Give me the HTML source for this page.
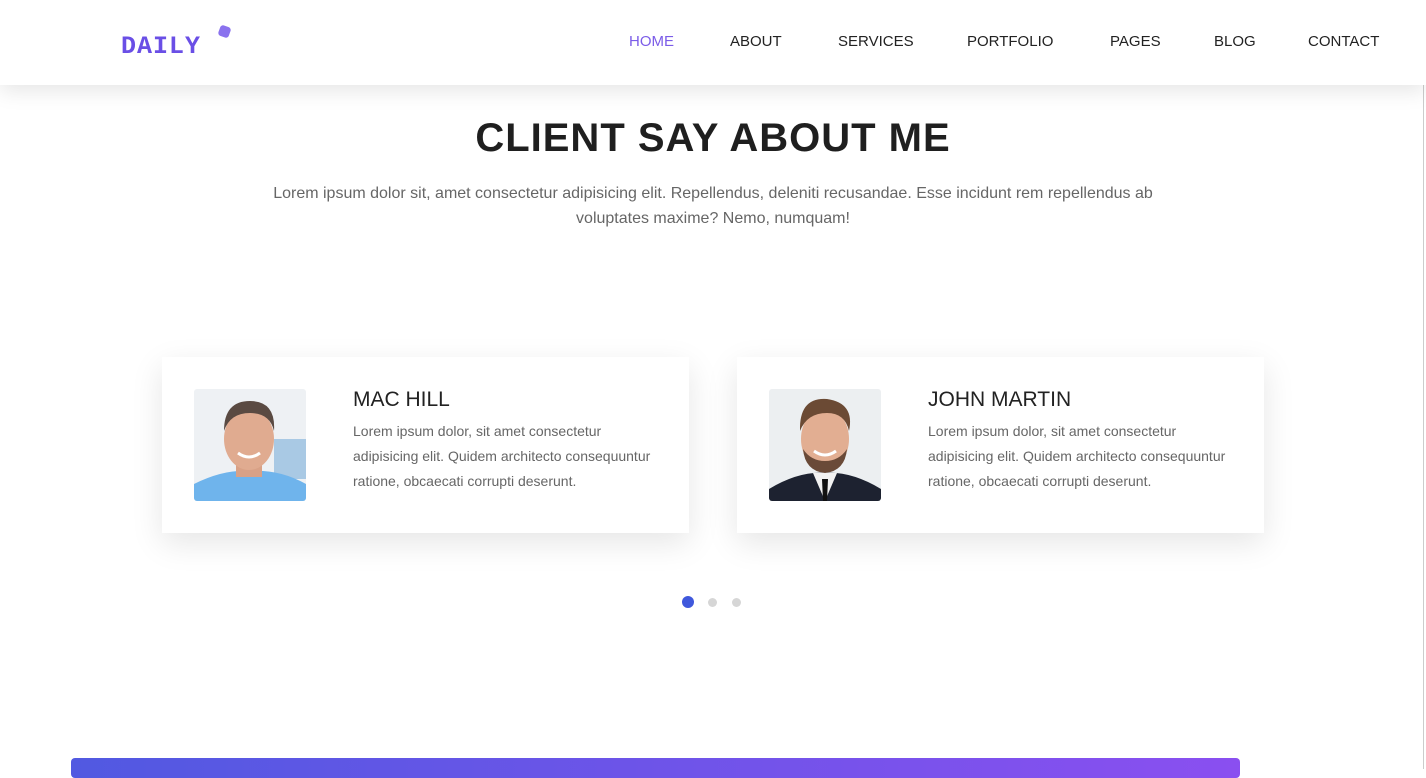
<!DOCTYPE html>
<html><head><meta charset="utf-8"><style>
*{margin:0;padding:0;box-sizing:border-box}
body{width:1426px;height:769px;overflow:hidden;background:#fff;font-family:"Liberation Sans",sans-serif;position:relative}
.hdr{position:absolute;left:0;top:0;width:1426px;height:85px;background:#fff;box-shadow:0 6px 20px rgba(0,0,0,.1);z-index:2}
.logo{position:absolute;left:121px;top:32px;font-family:"Liberation Mono",monospace;font-size:25px;letter-spacing:1px;color:#6a4fe6;font-weight:bold}
.dot{position:absolute;left:219px;top:26px;width:11px;height:11px;background:#8a72ee;border-radius:3px;transform:rotate(20deg)}
.nav{position:absolute;top:33px;font-size:15px;color:#222}
h1{position:absolute;top:116px;left:0;width:1426px;text-align:center;font-size:40px;font-weight:bold;color:#1f1f1f;letter-spacing:1px}
.sub{position:absolute;top:181px;left:240px;width:946px;text-align:center;font-size:16px;line-height:25px;color:#666}
.card{position:absolute;top:357px;width:527px;height:176px;background:#fff;box-shadow:0 10px 30px rgba(0,0,0,.1)}
.card svg{position:absolute;left:32px;top:32px;border-radius:3px}
.nm{position:absolute;left:191px;top:31px;font-size:21px;font-weight:normal;color:#222}
.tx{position:absolute;left:191px;top:62px;white-space:nowrap;font-size:14px;line-height:25px;color:#666}
.pd{position:absolute;top:598px;width:9px;height:9px;border-radius:50%;background:#d6d6d6}
.bar{position:absolute;left:71px;top:758px;width:1169px;height:20px;border-radius:4px;background:linear-gradient(90deg,#5159e1,#8a4ff0)}
.vl{position:absolute;left:1423px;top:0;width:1px;height:769px;background:#ccc}
</style></head><body>
<div class="hdr">
<div class="logo">DAILY</div><div class="dot"></div>
<div class="nav" style="left:629px;color:#7b5ce8">HOME</div>
<div class="nav" style="left:730px">ABOUT</div>
<div class="nav" style="left:838px">SERVICES</div>
<div class="nav" style="left:967px">PORTFOLIO</div>
<div class="nav" style="left:1110px">PAGES</div>
<div class="nav" style="left:1214px">BLOG</div>
<div class="nav" style="left:1308px">CONTACT</div>
</div>
<h1>CLIENT SAY ABOUT ME</h1>
<div class="sub">Lorem ipsum dolor sit, amet consectetur adipisicing elit. Repellendus, deleniti recusandae. Esse incidunt rem repellendus ab voluptates maxime? Nemo, numquam!</div>
<div class="card" style="left:162px">
<svg width="112" height="112" viewBox="0 0 112 112"><rect width="112" height="112" fill="#eef1f4"/><rect x="80" y="50" width="32" height="40" fill="#a9c9e4"/><path d="M0 112 L0 95 Q30 80 56 82 Q85 80 112 95 L112 112Z" fill="#6fb4ec"/><rect x="42" y="70" width="26" height="18" fill="#d9a186"/><ellipse cx="55" cy="50" rx="25" ry="31" fill="#e0ab90"/><path d="M30 42 Q30 12 56 12 Q82 12 80 42 Q76 24 56 24 Q36 24 30 42Z" fill="#5a4a42"/><path d="M44 64 Q55 72 66 64" stroke="#fff" stroke-width="3" fill="none"/></svg>
<div class="nm">MAC HILL</div>
<div class="tx">Lorem ipsum dolor, sit amet consectetur<br>adipisicing elit. Quidem architecto consequuntur<br>ratione, obcaecati corrupti deserunt.</div>
</div>
<div class="card" style="left:737px">
<svg width="112" height="112" viewBox="0 0 112 112"><rect width="112" height="112" fill="#eceff1"/><path d="M0 112 L0 100 Q30 82 56 84 Q82 82 112 100 L112 112Z" fill="#1d2230"/><path d="M44 84 L56 112 L68 84Z" fill="#f2f2f2"/><path d="M53 90 L59 90 L58 112 L54 112Z" fill="#111"/><ellipse cx="56" cy="50" rx="24" ry="31" fill="#e2ae92"/><path d="M34 60 Q36 82 56 84 Q76 82 78 60 Q70 72 56 72 Q42 72 34 60Z" fill="#6a4a38"/><path d="M31 42 Q30 8 58 10 Q86 14 80 42 Q76 24 58 24 Q38 24 31 42Z" fill="#6b4a34"/><path d="M45 62 Q56 70 67 62" stroke="#fff" stroke-width="3" fill="none"/></svg>
<div class="nm">JOHN MARTIN</div>
<div class="tx">Lorem ipsum dolor, sit amet consectetur<br>adipisicing elit. Quidem architecto consequuntur<br>ratione, obcaecati corrupti deserunt.</div>
</div>
<div class="pd" style="left:682px;top:596px;width:12px;height:12px;background:#3f58dc"></div>
<div class="pd" style="left:708px"></div>
<div class="pd" style="left:732px"></div>
<div class="bar"></div>
<div class="vl"></div>
</body></html>
